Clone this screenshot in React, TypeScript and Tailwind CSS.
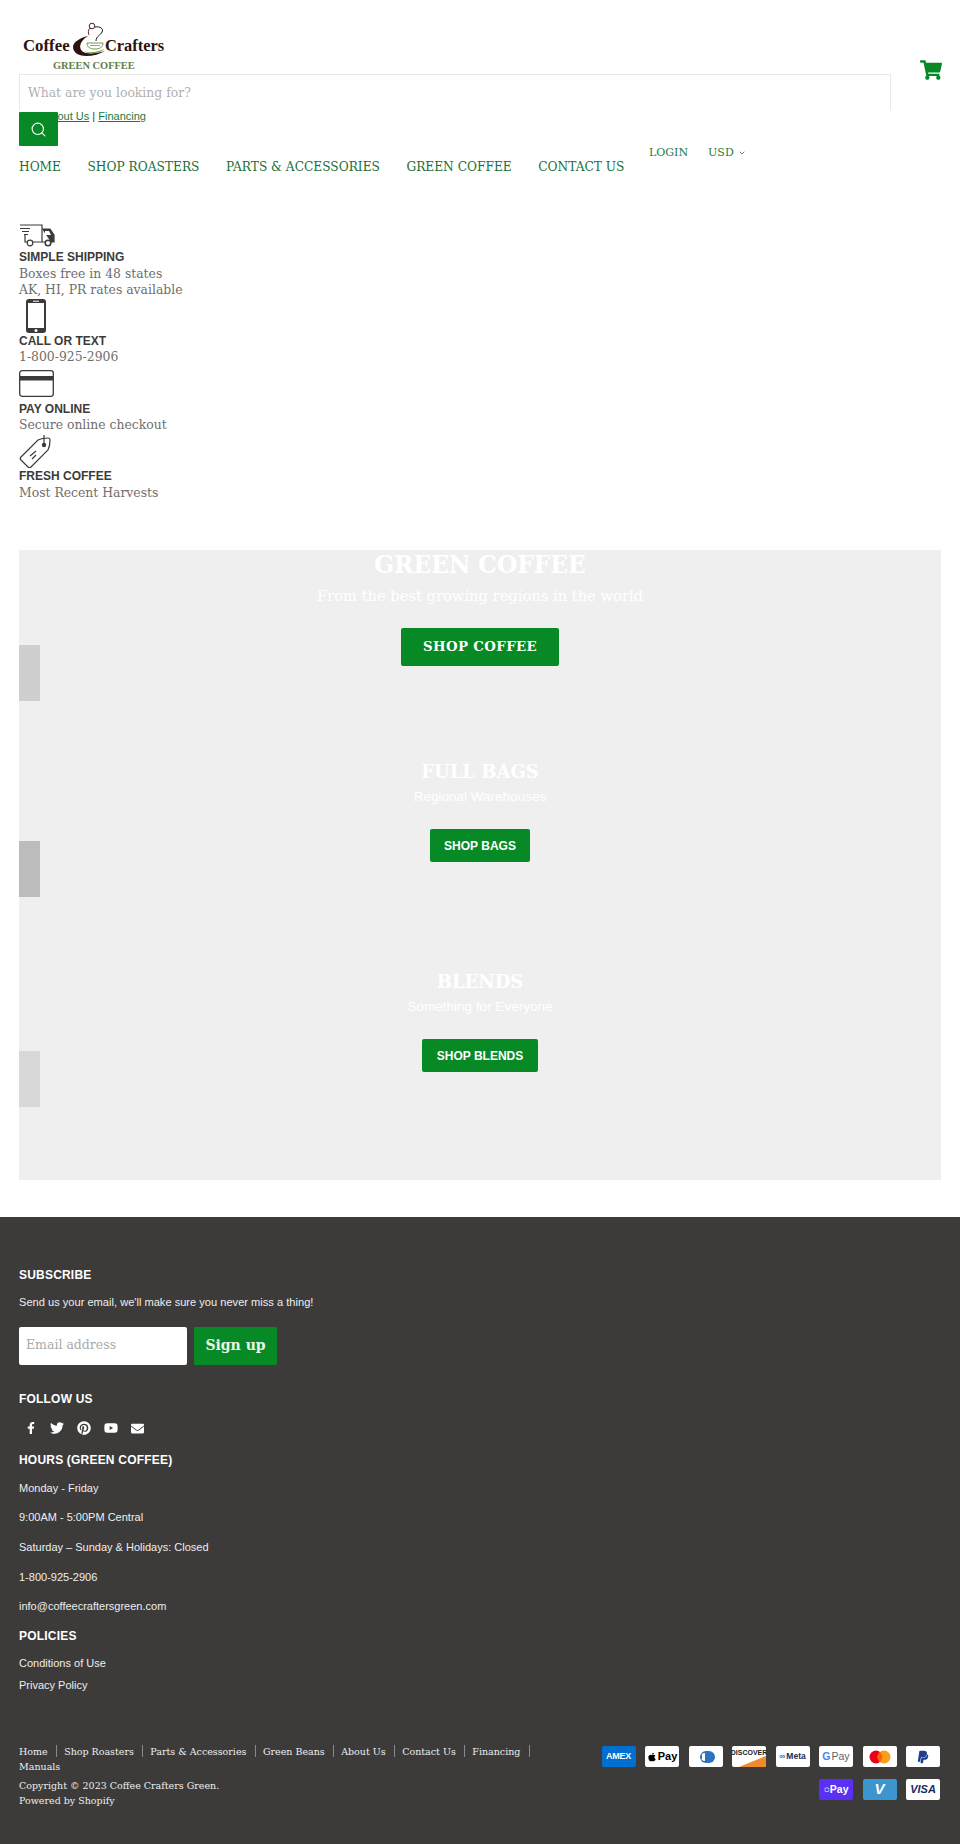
import { Search, ChevronDown } from "lucide-react"
import { FaFacebookF, FaTwitter, FaPinterest, FaYoutube, FaApple, FaPaypal, FaShoppingCart, FaEnvelope } from "react-icons/fa"

const slab = "font-['DejaVu_Serif',serif]"
const sans = "font-['Liberation_Sans',Arial,sans-serif]"

const navLinks = ["HOME", "SHOP ROASTERS", "PARTS & ACCESSORIES", "GREEN COFFEE", "CONTACT US"]
const footerLinks = ["Home", "Shop Roasters", "Parts & Accessories", "Green Beans", "About Us", "Contact Us", "Financing"]

const Logo = () => (
  <div className="relative w-[146px] h-[54px] ml-[3px] font-['Liberation_Serif',serif]">
    <span className="absolute left-[1px] top-[14px] text-[16.8px] font-bold leading-[24px] text-[#2c1210]">Coffee</span>
    <span className="absolute left-[83px] top-[14px] text-[16.4px] font-bold leading-[24px] text-[#2c1210]">Crafters</span>
    <svg className="absolute left-[48px] top-0" width="40" height="40" viewBox="70 20 40 40" fill="none">
      <circle cx="92" cy="26" r="2.8" stroke="#2c1210" strokeWidth="0.9" />
      <path d="M90 28c-2 2-2 5-1 7" stroke="#2c1210" strokeWidth="0.9" />
      <path d="M95 27c5-1 9 2 7 5-1 3-6 4-6 9" stroke="#2c1210" strokeWidth="1" />
      <path d="M88 36c-8 2-15 6-15 11 0 5 5 9 13 9 7 0 14-2 19-5-7 2-14 3-19 2-8-2-8-11 2-17z" fill="#2c1210" />
      <path d="M87 43h16c0 4-3 6-8 6s-8-2-8-6z" stroke="#6d9a4a" strokeWidth="1" />
      <path d="M90 45.500h10" stroke="#6d9a4a" strokeWidth="0.8" />
      <path d="M84 51.500c7 1.500 15 .5 20-2.500-3 4-14 5.500-20 2.500z" fill="#6d9a4a" />
    </svg>
    <span className="absolute left-[31px] top-[37.5px] text-[10.4px] font-bold leading-[15px] text-[#5e8048] whitespace-nowrap">GREEN COFFEE</span>
  </div>
)

const Truck = () => (
  <svg width="36" height="24" viewBox="0 0 36 24" fill="none" stroke="#3c3b3a" strokeWidth="1.2">
    <path d="M1 2h22v17H14M6 12v7h2" />
    <path d="M1 5.500h10M3 8.500h7M5 11.500h4" />
    <path d="M23 6h8l4 6v7h-3M23 19h3" fill="#3c3b3a" />
    <path d="M26 8h4l2 4h-6z" fill="#fff" stroke="none" />
    <circle cx="11" cy="20" r="2.8" fill="#fff" />
    <circle cx="29" cy="20" r="2.8" fill="#fff" strokeWidth="1.6" />
  </svg>
)

const Phone = () => (
  <svg width="20" height="34" viewBox="0 0 20 34" className="ml-[7px]">
    <rect x="0" y="0" width="20" height="34" rx="3" fill="#3c3b3a" />
    <rect x="2" y="4" width="16" height="25" fill="#fff" />
    <rect x="7" y="1.7" width="6" height="1" fill="#fff" />
    <circle cx="10" cy="31.5" r="1.5" fill="#fff" />
  </svg>
)

const Card = () => (
  <svg width="35" height="27" viewBox="0 0 35 27" fill="none">
    <rect x="0.7" y="0.7" width="33.6" height="25.6" rx="2.5" stroke="#3c3b3a" strokeWidth="1.3" />
    <rect x="1" y="6" width="33" height="4.5" fill="#3c3b3a" />
  </svg>
)

const Tag = () => (
  <svg width="34" height="34" viewBox="0 0 34 34" fill="none" stroke="#3c3b3a" strokeWidth="1.2">
    <path d="M2 23L19 6c2-1 8-2 10-2 1 0 2 1 2 2 0 3-1 8-2 10L12 33c-1 1-2 1-3 0l-7-7c-1-1-1-2 0-3z" />
    <circle cx="25" cy="11" r="1.6" fill="#3c3b3a" />
    <path d="M25 11V1M11 22l6-5M13 25l4-4" />
  </svg>
)

const Feature = ({ icon, title, lines, h }: { icon: React.ReactNode; title: string; lines: string[]; h: string }) => (
  <div>
    <div className={`${h} flex items-center`}>{icon}</div>
    <div className={`${sans} text-[12px] font-bold leading-[16.5px] text-[#3c3b3a]`}>{title}</div>
    {lines.map((l) => (
      <div key={l} className={`${slab} text-[12.4px] leading-[16.5px] text-[#6f6e6d]`}>{l}</div>
    ))}
  </div>
)

const Slide = ({ title, sub, btn, big }: { title: string; sub: string; btn: string; big?: boolean }) => (
  <div className="h-[210px] flex flex-col items-center text-white">
    {big ? (
      <>
        <h2 className={`${slab} font-bold text-[23.3px] leading-[30px] text-center`}>{title}</h2>
        <p className={`${slab} text-[14.7px] leading-[20px] mt-[6px] text-center`}>{sub}</p>
        <button className={`${slab} mt-[22px] w-[158px] h-[38px] rounded-[2px] bg-[#078a26] font-bold text-[13.3px] tracking-[0.4px]`}>{btn}</button>
      </>
    ) : (
      <>
        <h2 className={`${slab} font-bold text-[18px] leading-[24px] text-center`}>{title}</h2>
        <p className={`${sans} text-[13.5px] leading-[18px] mt-[4px] text-center`}>{sub}</p>
        <button className={`${sans} mt-[23px] px-[14.5px] h-[33px] rounded-[2px] bg-[#078a26] font-bold text-[12px]`}>{btn}</button>
      </>
    )}
  </div>
)

const Pay = ({ className, children }: { className: string; children: React.ReactNode }) => (
  <div className={`relative w-[34px] h-[21px] rounded-[2px] flex items-center justify-center overflow-hidden ${sans} ${className}`}>{children}</div>
)

const FootHead = ({ children }: { children: React.ReactNode }) => (
  <h3 className={`${sans} text-[12px] font-bold leading-[16px] tracking-[0.2px] text-white`}>{children}</h3>
)

export default function App() {
  return (
    <div className="w-[960px] h-[1844px] overflow-hidden bg-white">
      <header className="relative h-[220px] px-[19px] pt-[20px]">
        <Logo />
        <div className="mr-[50px] h-[36px] border-t border-l border-r border-[#e8e8e8] pl-[8px] pt-[2px] flex items-center">
          <span className={`${slab} text-[12.4px] text-[#b0b0b0]`}>What are you looking for?</span>
        </div>
        <div className={`${sans} text-[11px] leading-[13px] pl-[25px] text-[#3c3b3a]`}>
          <span className="underline text-[#1b7a3a]">About Us</span> | <span className="underline text-[#1b7a3a]">Financing</span>
        </div>
        <button className="absolute left-[19px] top-[112px] w-[39px] h-[34px] rounded-[1px] bg-[#078a26] flex items-center justify-center">
          <Search size={17} color="#fff" strokeWidth={1.6} />
        </button>
        <nav className={`${slab} flex gap-[26.5px] mt-[35px] text-[12.2px] leading-[18px] text-[#1a6f36]`}>
          {navLinks.map((n) => <span key={n} className="whitespace-nowrap">{n}</span>)}
        </nav>
        <div className={`absolute left-[649px] top-[146px] flex items-center ${slab} text-[11px] leading-[14px] text-[#2a7a45]`}>
          <span>LOGIN</span>
          <span className="ml-[20px]">USD</span>
          <ChevronDown size={8} strokeWidth={2.5} className="ml-[4px]" />
        </div>
        <FaShoppingCart className="absolute left-[920px] top-[59px] text-[#078a26]" size={22} />
      </header>

      <section className="px-[19px] h-[330px]">
        <Feature h="h-[29px]" icon={<Truck />} title="SIMPLE SHIPPING" lines={["Boxes free in 48 states", "AK, HI, PR rates available"]} />
        <Feature h="h-[34px]" icon={<Phone />} title="CALL OR TEXT" lines={["1-800-925-2906"]} />
        <Feature h="h-[35px]" icon={<Card />} title="PAY ONLINE" lines={["Secure online checkout"]} />
        <Feature h="h-[34.5px]" icon={<Tag />} title="FRESH COFFEE" lines={["Most Recent Harvests"]} />
      </section>

      <section className="relative mx-[19px] h-[630px] bg-[#efefef]">
        <Slide big title="GREEN COFFEE" sub="From the best growing regions in the world" btn="SHOP COFFEE" />
        <Slide title="FULL BAGS" sub="Regional Warehouses" btn="SHOP BAGS" />
        <Slide title="BLENDS" sub="Something for Everyone" btn="SHOP BLENDS" />
        <div className="absolute left-0 top-[95px] w-[21px] h-[56px] bg-[#cfcfcf]" />
        <div className="absolute left-0 top-[291px] w-[21px] h-[56px] bg-[#bcbcbc]" />
        <div className="absolute left-0 top-[501px] w-[21px] h-[56px] bg-[#d8d8d8]" />
      </section>

      <footer className="mt-[37px] h-[627px] bg-[#3c3b3a] px-[19px] pt-[50px] text-[#eeeeee]">
        <FootHead>SUBSCRIBE</FootHead>
        <p className={`${sans} text-[11.1px] leading-[16px] mt-[11px]`}>Send us your email, we'll make sure you never miss a thing!</p>
        <div className="flex gap-[7px] mt-[16.5px]">
          <div className={`${slab} w-[168px] h-[38px] rounded-[2px] bg-white pl-[7px] flex items-center text-[12.5px] text-[#aaaaaa]`}>Email address</div>
          <button className={`${slab} w-[83px] h-[38px] rounded-[1px] bg-[#078a26] font-bold text-[14px] text-[#e8f5e8]`}>Sign up</button>
        </div>
        <div className="mt-[26.5px]"><FootHead>FOLLOW US</FootHead></div>
        <div className="flex items-center gap-[13px] mt-[14px] pl-[6px] h-[14px] text-white">
          <FaFacebookF size={12} />
          <FaTwitter size={14} />
          <FaPinterest size={14} />
          <FaYoutube size={14} />
          <FaEnvelope size={13} />
        </div>
        <div className="mt-[17px]"><FootHead>HOURS (GREEN COFFEE)</FootHead></div>
        <div className={`${sans} text-[11px] leading-[16px] mt-[5.6px]`}>
          {["Monday - Friday", "9:00AM - 5:00PM Central", "Saturday – Sunday & Holidays: Closed", "1-800-925-2906", "info@coffeecraftersgreen.com"].map((t) => (
            <p key={t} className="h-[29.7px] pt-[6px]">{t}</p>
          ))}
        </div>
        <div className="mt-[6px]"><FootHead>POLICIES</FootHead></div>
        <div className={`${sans} text-[11px] leading-[16px] mt-[11px] flex flex-col gap-[6px]`}>
          <span>Conditions of Use</span>
          <span>Privacy Policy</span>
        </div>

        <div className="flex justify-between mt-[50.5px]">
          <div className={`${slab} w-[540px] text-[9.5px] leading-[15px]`}>
            <div className="flex flex-wrap">
              {footerLinks.map((l) => (
                <span key={l} className="pr-[8.5px] mr-[7px] h-[15px] whitespace-nowrap flex items-center">
                  <span>{l}</span>
                  <span className="ml-[8.5px] -mr-[8.5px] w-px h-[12px] bg-[#8a8a8a]" />
                </span>
              ))}
              <span className="w-full">Manuals</span>
            </div>
            <p className="mt-[4.7px]">Copyright © 2023 Coffee Crafters Green.</p>
            <p>Powered by Shopify</p>
          </div>
          <div className="w-[341px] pr-[1px] flex flex-wrap justify-end content-start gap-x-[9.5px] gap-y-[12px] mt-[2.5px]">
            <Pay className="bg-[#016fd0] text-white text-[9px] font-bold"><span className="tracking-[-0.3px]">AMEX</span></Pay>
            <Pay className="bg-white text-black text-[11px] font-bold"><FaApple size={10} /><span className="ml-[1px]">Pay</span></Pay>
            <Pay className="bg-white"><svg width="20" height="14" viewBox="0 0 20 14"><path d="M10 1h3a6 6 0 010 12h-3a6 6 0 010-12z" fill="#2a75bb" /><path d="M9 3a4 4 0 000 8z" fill="#fff" /><path d="M6 4.500a3 3 0 000 5z" fill="#2a75bb" /></svg></Pay>
            <Pay className="bg-white text-[#222] text-[7px] font-bold"><svg className="absolute inset-0" viewBox="0 0 34 21"><path d="M7 21L34 10v11z" fill="#ee8a2a" /></svg><span className="absolute top-[2px]">DISCOVER</span></Pay>
            <Pay className="bg-white text-[#1c2b4a] text-[8.5px] font-bold"><span className="text-[#2f6fd0] mr-[1px]">∞</span>Meta</Pay>
            <Pay className="bg-white text-[#5f6368] text-[10.5px]"><span className="text-[#4285f4] font-bold mr-[1px]">G</span>Pay</Pay>
            <Pay className="bg-white"><svg width="22" height="14" viewBox="0 0 22 14"><circle cx="7" cy="7" r="6.5" fill="#eb001b" /><circle cx="15" cy="7" r="6.5" fill="#f79e1b" /><path d="M11 2a6.5 6.5 0 010 10 6.5 6.5 0 010-10z" fill="#ff5f00" /></svg></Pay>
            <Pay className="bg-white text-[#1f3f8f]"><FaPaypal size={14} /></Pay>
            <Pay className="bg-[#5a31f4] text-white text-[10.5px] font-bold">○Pay</Pay>
            <Pay className="bg-[#3d95ce] text-white text-[15px] font-bold italic">V</Pay>
            <Pay className="bg-white text-[#172b5e] text-[11px] font-bold italic">VISA</Pay>
          </div>
        </div>
      </footer>
    </div>
  )
}
